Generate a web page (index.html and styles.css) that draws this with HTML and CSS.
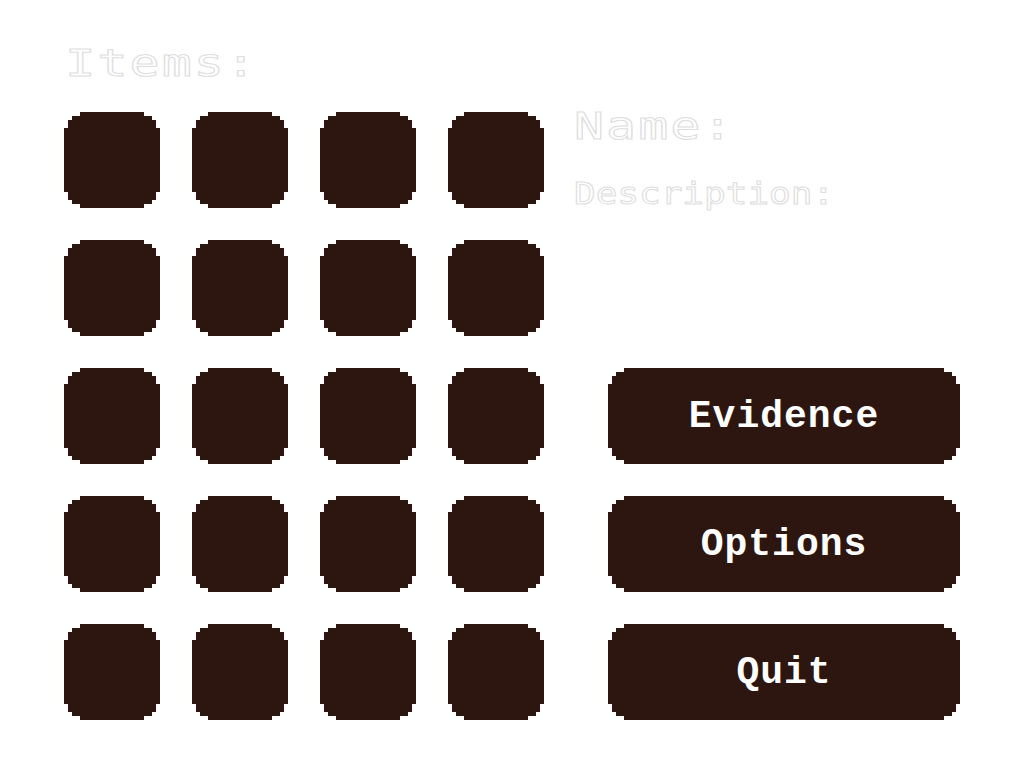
FILE: index.html
```html
<!DOCTYPE html>
<html lang="en">
<head>
<meta charset="utf-8">
<title>Inventory</title>
<link rel="stylesheet" href="styles.css">
</head>
<body>
<main class="screen">
  <h1 class="title">Items:</h1>
  <section class="grid">
    <div class="slot"></div><div class="slot"></div><div class="slot"></div><div class="slot"></div>
    <div class="slot"></div><div class="slot"></div><div class="slot"></div><div class="slot"></div>
    <div class="slot"></div><div class="slot"></div><div class="slot"></div><div class="slot"></div>
    <div class="slot"></div><div class="slot"></div><div class="slot"></div><div class="slot"></div>
    <div class="slot"></div><div class="slot"></div><div class="slot"></div><div class="slot"></div>
  </section>
  <aside class="details">
    <h2 class="name">Name:</h2>
    <p class="desc">Description:</p>
    <nav class="menu">
      <button class="btn">Evidence</button>
      <button class="btn">Options</button>
      <button class="btn">Quit</button>
    </nav>
  </aside>
</main>
</body>
</html>
```
FILE: styles.css
```css
html, body {
  margin: 0;
  padding: 0;
  background: #ffffff;
  overflow: hidden;
}

.screen {
  width: 1024px;
  height: 768px;
  box-sizing: border-box;
  padding: 40px 64px 48px 64px;
  display: grid;
  grid-template-columns: 480px 1fr;
  grid-template-rows: 48px 1fr;
  column-gap: 30px;
  row-gap: 24px;
}

.title,
.name,
.desc {
  margin: 0;
  width: max-content;
  font-family: "DejaVu Sans Mono", monospace;
  font-weight: normal;
  color: #ffffff;
  -webkit-text-stroke: 1px #dedede;
  transform-origin: left center;
  white-space: nowrap;
}

.title {
  grid-column: 1;
  grid-row: 1;
  justify-self: start;
  font-size: 37px;
  line-height: 48px;
  letter-spacing: 1.5px;
  padding-left: 1px;
  transform: scaleX(1.35);
}

.grid {
  grid-column: 1;
  grid-row: 2;
  display: grid;
  grid-template-columns: repeat(4, 96px);
  grid-auto-rows: 96px;
  gap: 32px;
}

.slot,
.btn {
  background: #2e1610;
  clip-path: polygon(16px 0, calc(100% - 16px) 0, calc(100% - 16px) 4px, calc(100% - 8px) 4px, calc(100% - 8px) 8px, calc(100% - 4px) 8px, calc(100% - 4px) 16px, 100% 16px, 100% calc(100% - 16px), calc(100% - 4px) calc(100% - 16px), calc(100% - 4px) calc(100% - 8px), calc(100% - 8px) calc(100% - 8px), calc(100% - 8px) calc(100% - 4px), calc(100% - 16px) calc(100% - 4px), calc(100% - 16px) 100%, 16px 100%, 16px calc(100% - 4px), 8px calc(100% - 4px), 8px calc(100% - 8px), 4px calc(100% - 8px), 4px calc(100% - 16px), 0 calc(100% - 16px), 0 16px, 4px 16px, 4px 8px, 8px 8px, 8px 4px, 16px 4px);
}

.details {
  grid-column: 2;
  grid-row: 2;
  display: flex;
  flex-direction: column;
  align-items: flex-start;
  min-width: 0;
}

.name {
  font-size: 37px;
  line-height: 30px;
  letter-spacing: 1.5px;
  transform: scaleX(1.35);
}

.desc {
  margin-top: 34px;
  font-size: 30px;
  line-height: 36px;
  letter-spacing: 0;
  transform: scaleX(1.2);
}

.menu {
  margin-top: auto;
  margin-left: 34px;
  display: flex;
  flex-direction: column;
  gap: 32px;
}

.btn {
  width: 352px;
  height: 96px;
  border: 0;
  padding: 0;
  color: #ffffff;
  font-family: "Courier New", "Nimbus Mono PS", "Nimbus Mono L", "FreeMono", "Liberation Mono", monospace;
  font-weight: bold;
  font-size: 38px;
  letter-spacing: 1px;
  cursor: pointer;
}
```
